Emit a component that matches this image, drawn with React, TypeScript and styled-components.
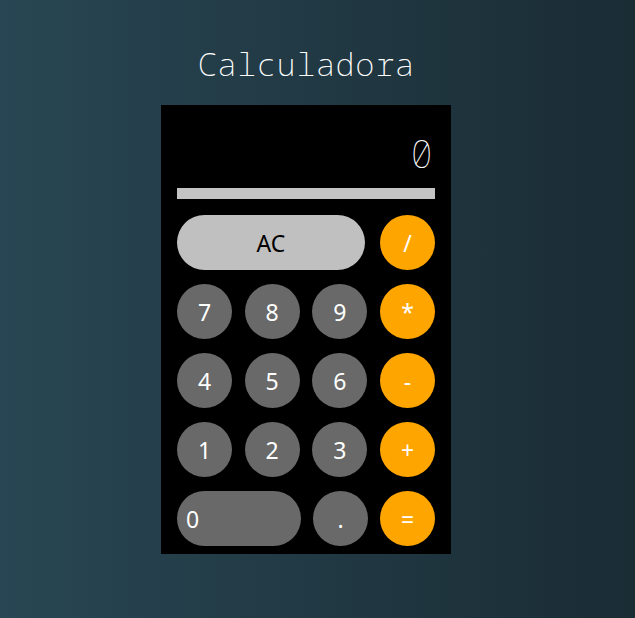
import React from "react";
import styled, { createGlobalStyle } from "styled-components";

const Global = createGlobalStyle`
  html, body { margin: 0; padding: 0; }
  body {
    min-height: 618px;
    background: linear-gradient(to right, #284653, #1a2c34);
    font-family: "Noto Sans", "Open Sans", sans-serif;
  }
`;

const Page = styled.div`
  display: flex;
  flex-direction: column;
  align-items: center;
  padding: 43px 23px 0 0;
`;

const Title = styled.h1`
  margin: 0 0 20px;
  font-family: "Noto Sans Mono", "DejaVu Sans Mono", monospace;
  font-weight: 250;
  font-size: 32px;
  line-height: 42px;
  color: #ffffff;
  letter-spacing: 0.5px;
`;

const Calc = styled.div`
  width: 290px;
  background: #000;
  padding: 0 16px 8px 16px;
  box-sizing: border-box;
  display: flex;
  flex-direction: column;
`;

const Display = styled.div`
  height: 83px;
  display: flex;
  align-items: flex-end;
  justify-content: flex-end;
  padding: 0 2px 16px 0;
  box-sizing: border-box;
  font-family: "Noto Sans Mono", "DejaVu Sans Mono", monospace;
  font-weight: 100;
  font-size: 38px;
  line-height: 38px;
  color: #ffffff;
`;

const Bar = styled.div`
  height: 11px;
  background: #c4c4c4;
  margin-bottom: 16px;
`;

const Keys = styled.div`
  display: flex;
  flex-direction: column;
  gap: 14px;
`;

const Row = styled.div`
  display: flex;
  justify-content: space-between;
`;

type Kind = "num" | "op" | "clear";

const Key = styled.button<{ $kind: Kind; $w?: number; $left?: boolean }>`
  width: ${(p) => p.$w ?? 55}px;
  height: 55px;
  border: none;
  border-radius: 28px;
  padding: 0 ${(p) => (p.$left ? "9px" : "0")};
  display: flex;
  align-items: center;
  justify-content: ${(p) => (p.$left ? "flex-start" : "center")};
  font-family: "Noto Sans", "Open Sans", sans-serif;
  font-size: 23px;
  cursor: pointer;
  background: ${(p) =>
    p.$kind === "op" ? "#ffa500" : p.$kind === "clear" ? "#c0c0c0" : "#696969"};
  color: ${(p) => (p.$kind === "clear" ? "#000" : "#fff")};
`;

export default function App() {
  return (
    <>
      <Global />
      <Page>
        <Title>Calculadora</Title>
        <Calc>
          <Display>0</Display>
          <Bar />
          <Keys>
            <Row>
              <Key $kind="clear" $w={188}>AC</Key>
              <Key $kind="op">/</Key>
            </Row>
            <Row>
              <Key $kind="num">7</Key>
              <Key $kind="num">8</Key>
              <Key $kind="num">9</Key>
              <Key $kind="op">*</Key>
            </Row>
            <Row>
              <Key $kind="num">4</Key>
              <Key $kind="num">5</Key>
              <Key $kind="num">6</Key>
              <Key $kind="op">-</Key>
            </Row>
            <Row>
              <Key $kind="num">1</Key>
              <Key $kind="num">2</Key>
              <Key $kind="num">3</Key>
              <Key $kind="op">+</Key>
            </Row>
            <Row>
              <Key $kind="num" $w={124} $left>0</Key>
              <Key $kind="num">.</Key>
              <Key $kind="op">=</Key>
            </Row>
          </Keys>
        </Calc>
      </Page>
    </>
  );
}
